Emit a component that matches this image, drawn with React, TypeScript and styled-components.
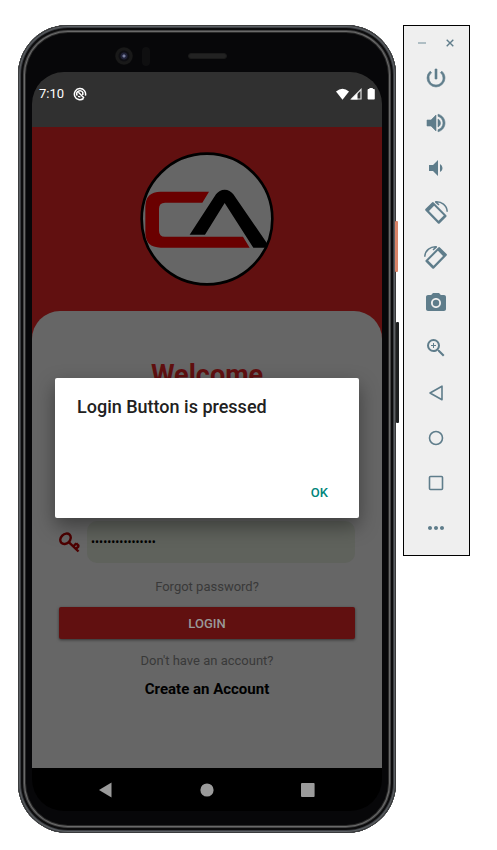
import React from "react";
import styled, { createGlobalStyle } from "styled-components";
import {
  MdPowerSettingsNew,
  MdVolumeUp,
  MdVolumeDown,
  MdPhotoCamera,
  MdZoomIn,
  MdMoreHoriz,
} from "react-icons/md";

const GlobalStyle = createGlobalStyle`
  * { box-sizing: border-box; }
  body { margin: 0; background: #fff; font-family: Roboto, "Liberation Sans", sans-serif; }
  button, input { font-family: inherit; margin: 0; }
`;

const Page = styled.main`
  display: flex;
  align-items: flex-start;
  gap: 7px;
  padding: 25px 27px 16px 18px;
`;

const Phone = styled.section`
  position: relative;
  flex: 1;
  min-width: 0;
  max-width: 480px;
  padding: 0 14px 22px;
  border-radius: 50px;
  background: #070709;
  box-shadow:
    inset 0 0 0 1px #3a3b3c,
    inset 0 0 0 2px #5c6064,
    inset 0 0 0 3px #3c3e42,
    inset 0 0 0 5px #0c0c0d,
    inset 0 0 0 6px #444445,
    inset 0 0 0 7px #6a6a6a,
    inset 0 0 0 8px #2a2a2a;
`;

const SideKey = styled.span<{ $top: number; $height: number; $color: string; $out: number }>`
  position: absolute;
  top: ${(p) => p.$top}px;
  right: -${(p) => p.$out}px;
  width: 3px;
  height: ${(p) => p.$height}px;
  border-radius: 1px;
  background: ${(p) => p.$color};
`;

const Bezel = styled.div`
  display: grid;
  grid-template-columns: 1fr auto 1fr;
  align-items: center;
  height: 47px;
  padding-top: 15px;
`;

const Sensors = styled.div`
  display: flex;
  align-items: center;
  justify-content: flex-end;
  gap: 9px;
  padding-right: 38px;
`;

const Camera = styled.span`
  width: 18px;
  height: 18px;
  border-radius: 50%;
  background: radial-gradient(circle, #7a80a0 0 1px, #202238 2px 3px, #0e0e12 4px 5px, #191919 6px 8px, #0e0e0e 9px);
`;

const Proximity = styled.span`
  width: 8px;
  height: 19px;
  border-radius: 4px;
  background: #0f0f10;
`;

const Speaker = styled.span`
  width: 39px;
  height: 6px;
  border-radius: 3px;
  background: #222;
  border: 1px solid #1a1a1a;
`;

const Screen = styled.div`
  border-radius: 32px;
  overflow: hidden;
  background: #000;
`;

const StatusBar = styled.header`
  display: flex;
  align-items: center;
  height: 55px;
  padding: 0 7px 11px;
  background: #303030;
  color: #fff;
  font-size: 13px;
`;

const Clock = styled.time`
  margin-right: 9px;
  line-height: 16px;
`;

const StatusIcons = styled.div`
  display: flex;
  align-items: center;
  gap: 1px;
  margin-left: auto;
`;

const Content = styled.div`
  position: relative;
  background: #611010;
`;

const Hero = styled.div`
  display: flex;
  justify-content: center;
  padding: 25px 0;
`;

const Panel = styled.form`
  display: flex;
  flex-direction: column;
  align-items: center;
  padding: 48px 27px 69px;
  border-radius: 28px 28px 0 0;
  background: #666;
`;

const Welcome = styled.h1`
  margin: 0 0 130px;
  color: #611010;
  font-size: 27px;
  line-height: 32px;
  font-weight: 700;
`;

const PasswordRow = styled.label`
  display: flex;
  align-items: center;
  gap: 7px;
  width: 100%;
  margin-bottom: 14px;
`;

const PasswordInput = styled.input`
  flex: 1;
  min-width: 0;
  height: 42px;
  padding: 0 4px;
  border: 0;
  border-radius: 10px;
  background: #5f625c;
  color: #000;
  font-size: 12px;
  outline: none;
`;

const MutedLink = styled.a`
  margin-bottom: 10px;
  color: #393939;
  font-size: 13px;
  line-height: 20px;
  text-decoration: none;
`;

const LoginButton = styled.button`
  width: 100%;
  height: 32px;
  margin-bottom: 12px;
  padding: 0;
  border: 0;
  border-radius: 2px;
  background: #611010;
  box-shadow: 0 1px 3px rgba(0, 0, 0, 0.5);
  color: #999;
  font-size: 13px;
  font-weight: 500;
`;

const Hint = styled.p`
  margin: 0 0 8px;
  color: #393939;
  font-size: 13px;
  line-height: 20px;
`;

const CreateLink = styled.a`
  color: #000;
  font-size: 15px;
  line-height: 20px;
  font-weight: 700;
  text-decoration: none;
`;

const Overlay = styled.div`
  position: absolute;
  inset: 0;
  display: flex;
  align-items: center;
  padding: 0 23px;
`;

const Dialog = styled.div`
  display: flex;
  flex-direction: column;
  flex: 1;
  min-height: 140px;
  padding: 17px 22px 13px;
  border-radius: 2px;
  background: #fff;
  box-shadow: 0 8px 20px rgba(0, 0, 0, 0.4);
`;

const DialogTitle = styled.h2`
  margin: 0;
  color: #212121;
  font-size: 18px;
  line-height: 24px;
  font-weight: 500;
`;

const OkButton = styled.button`
  align-self: flex-end;
  margin-top: auto;
  padding: 0 9px;
  border: 0;
  background: none;
  color: #00857a;
  font-size: 13px;
  line-height: 24px;
  font-weight: 500;
`;

const NavBar = styled.nav`
  display: grid;
  grid-template-columns: repeat(3, 1fr);
  height: 43px;
  padding: 0 23px;
`;

const NavButton = styled.button`
  display: flex;
  align-items: center;
  justify-content: center;
  padding: 0;
  border: 0;
  background: none;
  color: #9b9b9b;
`;

const Toolbar = styled.aside`
  display: flex;
  flex-direction: column;
  flex: 0 0 67px;
  padding: 0 2px 5px 0;
  border: 1px solid #000;
  background: #efefef;
`;

const WindowControls = styled.div`
  display: flex;
  justify-content: center;
  gap: 16px;
  height: 29px;
  padding-top: 5px;
`;

const WindowButton = styled.button`
  display: flex;
  align-items: center;
  justify-content: center;
  width: 12px;
  padding: 0;
  border: 0;
  background: none;
  color: #607d8b;
`;

const ToolButton = styled.button<{ $bold?: boolean }>`
  display: flex;
  align-items: center;
  justify-content: center;
  height: 45px;
  padding: 0;
  border: 0;
  background: none;
  color: #5f7d8b;

  & > svg {
    stroke-width: ${(p) => (p.$bold ? "0.6px" : "0")};
  }

  & path[fill="none"]:first-child {
    stroke: none;
  }
`;

const Logo = () => (
  <svg width="134" height="134" viewBox="30 22 402 402" role="img" aria-label="CA">
    <circle cx="231" cy="223" r="196" fill="#666" stroke="#000" strokeWidth="8" />
    <path
      fill="#6a0000"
      d="M237 141H92Q46 141 46 187V263Q46 309 92 309H359L339 276H105Q87 276 87 258V192Q87 174 105 174H217Z"
    />
    <path
      fill="#000"
      d="M179 270L258 149Q268 135 284 135Q300 135 310 149L412 297L409 309H370L284 175L225 270Z"
    />
  </svg>
);

const KeyIcon = () => (
  <svg width="21" height="21" viewBox="0 0 21 21" fill="none" stroke="#4d0000" aria-hidden="true">
    <ellipse cx="6.5" cy="6.8" rx="5.8" ry="4.6" strokeWidth="2.4" transform="rotate(-45 6.5 6.8)" />
    <path d="M9.5 9.8L19.5 19.5M14.8 14L17.3 11.2M17 16.8L20 13.8M17.2 11.4L20 14.2" strokeWidth="2.4" />
  </svg>
);

const RotateIcon = ({ mirrored }: { mirrored?: boolean }) => (
  <svg width="24" height="24" viewBox="0 0 24 24" fill="currentColor" aria-hidden="true">
    <g transform={mirrored ? "matrix(-1 0 0 1 24 0)" : undefined}>
      <path
        fillRule="evenodd"
        d="M1.4 8L8.3 1.3Q9 .8 9.7 1.4L22.3 14.3Q23 15 22.3 15.7L15.6 22.4Q14.8 23 14 22.4L1.4 9.5Q.8 8.7 1.4 8ZM5 10L14.5 19.7L19.8 14.5L10.1 4.8Z"
      />
      <path
        d="M11 .9C17.5 .1 23 4.4 23.2 10.8M11.5 1L15 3.8"
        fill="none"
        stroke="currentColor"
        strokeWidth="1.5"
      />
    </g>
  </svg>
);

const Outline = ({ children }: { children: React.ReactNode }) => (
  <svg width="18" height="18" viewBox="0 0 18 18" fill="none" stroke="currentColor" strokeLinejoin="round" aria-hidden="true">
    <g strokeWidth="1.6">{children}</g>
  </svg>
);

const tools = [
  { label: "Power", icon: <MdPowerSettingsNew size={24} />, bold: true },
  { label: "Volume up", icon: <MdVolumeUp size={24} />, bold: true },
  { label: "Volume down", icon: <MdVolumeDown size={24} /> },
  { label: "Rotate left", icon: <RotateIcon /> },
  { label: "Rotate right", icon: <RotateIcon mirrored /> },
  { label: "Take screenshot", icon: <MdPhotoCamera size={24} /> },
  { label: "Zoom", icon: <MdZoomIn size={24} /> },
  { label: "Back", icon: <Outline><path d="M3 9L15 2.2V15.8Z" /></Outline> },
  { label: "Home", icon: <Outline><circle cx="9" cy="9" r="6.5" /></Outline> },
  { label: "Overview", icon: <Outline><rect x="2.5" y="2.5" width="13" height="13" rx="1" /></Outline> },
  { label: "More", icon: <MdMoreHoriz size={24} /> },
];

export default function App() {
  return (
    <>
      <GlobalStyle />
      <Page>
        <Phone>
          <SideKey $top={196} $height={51} $out={2} $color="#d98468" />
          <SideKey $top={297} $height={101} $out={3} $color="#1d1f20" />
          <Bezel>
            <Sensors>
              <Camera />
              <Proximity />
            </Sensors>
            <Speaker />
          </Bezel>
          <Screen>
            <StatusBar>
              <Clock>7:10</Clock>
              <svg width="14" height="14" viewBox="0 0 14 14" fill="none" stroke="#fff" aria-hidden="true">
                <path d="M10.6 11.4A5.6 5.6 0 1 1 12.4 8.6" strokeWidth="1.5" />
                <path d="M4.2 8.6A3.2 3.2 0 0 1 9.8 5.4V8M5.4 5.2L11 11" strokeWidth="1.5" />
                <path d="M5 9.4L7.4 9.8" strokeWidth="1.2" />
              </svg>
              <StatusIcons>
                <svg width="13" height="12" viewBox="0 0 13 12" fill="#fff" aria-hidden="true">
                  <path d="M6.5 11.7L0 3.5Q6.5-2.2 13 3.5Z" />
                </svg>
                <svg width="12" height="12" viewBox="0 0 12 12" fill="none" aria-hidden="true">
                  <path d="M1.5 11H11V1.5Z" stroke="#ddd" strokeWidth="1.2" />
                  <path d="M1 11.5H7.5V5Z" fill="#fff" />
                </svg>
                <svg width="12" height="12" viewBox="0 0 12 12" fill="#fff" aria-hidden="true">
                  <path d="M6.4 0H9.8V1H11Q11.8 1 11.8 2V10.8Q11.8 11.6 11 11.6H5.4Q4.6 11.6 4.6 10.8V2Q4.6 1 5.4 1H6.4Z" />
                </svg>
              </StatusIcons>
            </StatusBar>
            <Content>
              <Hero>
                <Logo />
              </Hero>
              <Panel onSubmit={(e) => e.preventDefault()}>
                <Welcome>Welcome</Welcome>
                <PasswordRow>
                  <KeyIcon />
                  <PasswordInput type="password" aria-label="Password" defaultValue="0123456789abcdef" />
                </PasswordRow>
                <MutedLink href="#forgot">Forgot password?</MutedLink>
                <LoginButton type="submit">LOGIN</LoginButton>
                <Hint>Don't have an account?</Hint>
                <CreateLink href="#create">Create an Account</CreateLink>
              </Panel>
              <Overlay>
                <Dialog role="alertdialog" aria-labelledby="dialog-title">
                  <DialogTitle id="dialog-title">Login Button is pressed</DialogTitle>
                  <OkButton type="button">OK</OkButton>
                </Dialog>
              </Overlay>
            </Content>
            <NavBar>
              <NavButton aria-label="Back">
                <svg width="14" height="16" viewBox="0 0 14 16" fill="currentColor"><path d="M0 8L12.5 .5V15.5Z" /></svg>
              </NavButton>
              <NavButton aria-label="Home">
                <svg width="14" height="14" viewBox="0 0 14 14" fill="currentColor"><circle cx="7" cy="7" r="6.6" /></svg>
              </NavButton>
              <NavButton aria-label="Overview">
                <svg width="14" height="14" viewBox="0 0 14 14" fill="currentColor"><rect width="13.6" height="14" rx="1" /></svg>
              </NavButton>
            </NavBar>
          </Screen>
        </Phone>
        <Toolbar>
          <WindowControls>
            <WindowButton aria-label="Minimize">
              <svg width="8" height="8" viewBox="0 0 8 8" stroke="#9fb1b9" strokeWidth="1.6"><path d="M0 4H8" /></svg>
            </WindowButton>
            <WindowButton aria-label="Close">
              <svg width="8" height="8" viewBox="0 0 8 8" stroke="currentColor" strokeWidth="1.4"><path d="M.7 .7L7.3 7.3M7.3 .7L.7 7.3" /></svg>
            </WindowButton>
          </WindowControls>
          {tools.map((t) => (
            <ToolButton key={t.label} $bold={t.bold} aria-label={t.label} title={t.label}>
              {t.icon}
            </ToolButton>
          ))}
        </Toolbar>
      </Page>
    </>
  );
}
